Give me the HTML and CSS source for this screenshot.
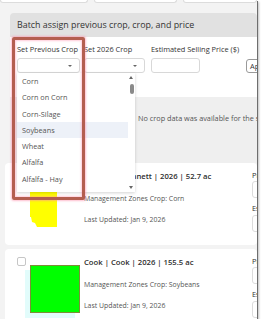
FILE: index.html
```html
<!DOCTYPE html>
<html>
<head>
<meta charset="utf-8">
<link rel="stylesheet" href="styles.css">
</head>
<body>
<div class="frame">
  <div class="topstrip">
    <div class="tbox tb1"></div>
    <div class="tbox tb2"></div>
    <div class="tbox tb3"></div>
  </div>
  <section class="batch">
    <div class="batch-head">Batch assign previous crop, crop, and price</div>
    <div class="batch-body">
      <div class="fields">
        <div class="fcol c1"><div class="lbl">Set Previous Crop</div><div class="sel"></div></div>
        <div class="fcol c2"><div class="lbl">Set 2026 Crop</div><div class="sel"></div></div>
        <div class="fcol c3"><div class="lbl">Estimated Selling Price ($)</div><div class="inp"></div></div>
        <div class="fcol c4"><div class="btn">Apply</div></div>
      </div>
      <div class="nodata">No crop data was available for the selected fields.</div>
    </div>
  </section>

  <div class="card">
    <div class="chk"></div>
    <div class="thumb">
      <svg width="50" height="48" viewBox="0 0 50 48"><polygon points="0,0 27,0 27,48 7,48 5,44 2,43 1,38 0,38" fill="#ffff00"/></svg>
    </div>
    <div class="info">
      <div class="title">Bennett | Bennett | 2026 | 52.7 ac</div>
      <div class="meta mz">Management Zones Crop: Corn</div>
      <div class="meta lu">Last Updated: Jan 9, 2026</div>
    </div>
    <div class="side">
      <div class="slbl">Previous Crop</div>
      <div class="sinp"></div>
      <div class="slbl l2">Estimated Selling Price ($)</div>
      <div class="sinp s2"></div>
    </div>
  </div>

  <div class="card card2">
    <div class="chk"></div>
    <div class="thumb green"></div>
    <div class="info">
      <div class="title">Cook | Cook | 2026 | 155.5 ac</div>
      <div class="meta mz">Management Zones Crop: Soybeans</div>
      <div class="meta lu">Last Updated: Jan 9, 2026</div>
    </div>
    <div class="side">
      <div class="slbl">Previous Crop</div>
      <div class="sinp"></div>
      <div class="slbl l2">Estimated Selling Price ($)</div>
      <div class="sinp s2"></div>
    </div>
  </div>

  <div class="dd">
    <div class="dd-list">
      <div class="dd-item">Corn</div>
      <div class="dd-item">Corn on Corn</div>
      <div class="dd-item">Corn-Silage</div>
      <div class="dd-item hl">Soybeans</div>
      <div class="dd-item">Wheat</div>
      <div class="dd-item">Alfalfa</div>
      <div class="dd-item">Alfalfa - Hay</div>
    </div>
    <div class="dd-scroll">
      <div class="arr up"></div>
      <div class="thumbbar"></div>
      <div class="arr down"></div>
    </div>
  </div>

  <div class="hl-box"></div>
</div>
</body>
</html>
```

FILE: styles.css
```css
html, body {
  margin: 0;
  background: #ffffff;
  font-family: "Open Sans", "Liberation Sans", sans-serif;
}

.frame {
  position: relative;
  width: 257px;
  height: 319px;
  overflow: hidden;
  background: #f3f3f3;
  box-shadow: 1px 1px 0 #6e6e6e, 2px 2px 2px rgba(0,0,0,0.25);
}

.topstrip {
  display: flex;
  gap: 6px;
  height: 3px;
}
.tbox {
  background: #fff;
  border: 1px solid #dcdcdc;
  border-top: 0;
  border-radius: 0 0 3px 3px;
  box-sizing: border-box;
}
.tb1 { width: 88px; }
.tb2 { width: 83px; }
.tb3 { flex: 1; }

.batch {
  margin: 10px 0 0 10px;
}
.batch-head {
  height: 24px;
  line-height: 24px;
  background: #e1e1e1;
  border-radius: 4px 4px 0 0;
  padding-left: 7px;
  font-size: 8.9px;
  color: #333;
  white-space: nowrap;
}
.batch-body {
  background: #fff;
}
.fields {
  display: flex;
  padding: 8px 0 24px 7px;
}
.fcol { flex: none; }
.c1 { width: 63px; margin-right: 4px; }
.c2 { width: 61px; margin-right: 6px; }
.c3 { width: 90px; margin-right: 5px; }
.c4 { width: 40px; }
.lbl {
  height: 9px;
  line-height: 9px;
  font-size: 7.4px;
  color: #333;
  white-space: nowrap;
}
.sel, .inp {
  margin-top: 4px;
  height: 15px;
  border: 1px solid #d8d8d8;
  border-radius: 3px;
  box-sizing: border-box;
  background: #fff;
  position: relative;
}
.sel::after {
  content: "";
  position: absolute;
  right: 7px;
  top: 6px;
  border-left: 2px solid transparent;
  border-right: 2px solid transparent;
  border-top: 2px solid #666;
}
.inp { width: 49px; }
.btn {
  margin-top: 14px;
  height: 14px;
  line-height: 12px;
  border: 1px solid #9a9a9a;
  border-radius: 3px;
  box-sizing: border-box;
  font-size: 7.4px;
  color: #333;
  padding-left: 3px;
}
.nodata {
  height: 66px;
  box-sizing: border-box;
  background: #efefef;
  padding: 17px 0 0 128px;
  font-size: 7.3px;
  line-height: 9px;
  color: #555;
  white-space: nowrap;
}

.card {
  margin-left: 5px;
  height: 82px;
  box-sizing: border-box;
  background: #fff;
  border-radius: 4px;
  display: flex;
  padding: 8px 0 0 12px;
}
.card2 { margin-top: 4px; }
.chk {
  flex: none;
  width: 9px;
  height: 9px;
  border: 1px solid #c6c6c6;
  border-radius: 2px;
  box-sizing: border-box;
  margin-right: 4px;
}
.thumb {
  flex: none;
  width: 50px;
  height: 48px;
  margin-top: 8px;
  margin-right: 4px;
}
.thumb svg { display: block; }
.thumb.green {
  background: #00ff00;
  border: 1px solid #7d8d36;
  box-sizing: border-box;
  box-shadow: -5px 5px 0 #e2fcfb;
}
.info {
  flex: none;
  width: 168px;
}
.title {
  font-size: 7.7px;
  font-weight: 600;
  line-height: 10px;
  color: #2e2e2e;
  white-space: nowrap;
}
.meta {
  font-size: 6.9px;
  line-height: 8px;
  color: #555;
  white-space: nowrap;
}
.mz { margin-top: 14px; }
.lu { margin-top: 12.5px; }
.side {
  flex: none;
  width: 80px;
}
.slbl {
  height: 9px;
  line-height: 9px;
  font-size: 7.4px;
  color: #333;
  white-space: nowrap;
}
.sinp {
  margin-top: 1px;
  height: 17px;
  border: 1px solid #dcdcdc;
  border-radius: 3px;
  box-sizing: border-box;
}
.l2 { margin-top: 5.5px; }
.s2 { margin-top: 2.5px; }

.dd {
  position: absolute;
  left: 17px;
  top: 73px;
  width: 118px;
  height: 119px;
  background: #fff;
  box-shadow: 0 1px 3px rgba(0,0,0,0.18);
  display: flex;
}
.dd-list { flex: 1; }
.dd-item {
  height: 16.3px;
  line-height: 16.3px;
  padding-left: 5px;
  font-size: 7.3px;
  color: #555;
  white-space: nowrap;
}
.dd-item.hl { background: #edf1f8; }
.dd-scroll {
  width: 7px;
  position: relative;
}
.arr {
  position: absolute;
  left: 1px;
  border-left: 2.5px solid transparent;
  border-right: 2.5px solid transparent;
}
.arr.up { top: 3px; border-bottom: 3px solid #666; }
.arr.down { top: 113px; border-top: 3px solid #666; }
.thumbbar {
  position: absolute;
  left: 1.5px;
  top: 11px;
  width: 4px;
  height: 10px;
  border-radius: 2px;
  background: #8a8a8a;
}

.hl-box {
  position: absolute;
  left: 12px;
  top: 37px;
  width: 73px;
  height: 163px;
  box-sizing: border-box;
  border: 3px solid #b45e50;
  border-radius: 2px;
  box-shadow: 0 0 2px 1px rgba(255,140,170,0.55), inset 0 0 2px 1px rgba(255,140,170,0.45);
}
```
